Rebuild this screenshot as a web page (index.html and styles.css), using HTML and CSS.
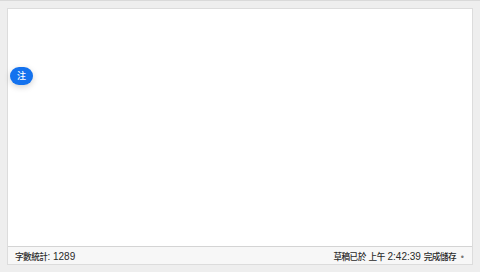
FILE: index.html
```html
<!DOCTYPE html>
<html lang="zh-Hant">
<head>
<meta charset="utf-8">
<link rel="stylesheet" href="styles.css">
</head>
<body>
<div class="frame">
  <div class="editor">
    <div class="page">
      <button class="note-btn">注</button>
    </div>
    <div class="status">
      <span class="count"><span class="cjk">字數統計</span>: 1289</span>
      <span class="saved"><span class="cjk">草稿已於</span> <span class="cjk">上午</span> 2:42:39 <span class="cjk">完成儲存</span> <span class="dot">•</span></span>
    </div>
  </div>
</div>
</body>
</html>
```
FILE: styles.css
```css
html, body {
  margin: 0;
  padding: 0;
  width: 480px;
  height: 272px;
  overflow: hidden;
}
body {
  background: #eeeeee;
  font-family: "Liberation Sans", "Noto Sans CJK TC", sans-serif;
  color: #333;
}
.frame {
  box-sizing: border-box;
  height: 272px;
  border-top: 1px solid #d9d9d9;
  padding: 7px 7px 7px 7px;
  display: flex;
}
.editor {
  flex: 1;
  display: flex;
  flex-direction: column;
  border: 1px solid #dcdcdc;
  background: #fff;
}
.page {
  flex: 1;
  position: relative;
  background: #fff;
}
.note-btn {
  position: absolute;
  left: 2px;
  top: 58px;
  width: 23px;
  height: 18px;
  border: none;
  border-radius: 9px;
  background: #1472ee;
  color: #fff;
  font-family: "Noto Sans CJK TC", sans-serif;
  font-size: 9px;
  font-weight: 500;
  padding: 0;
  line-height: 18px;
  box-shadow: 0 2px 6px rgba(0,0,0,0.18);
}
.status {
  height: 17px;
  border-top: 1px solid #d4d4d4;
  background: #f7f7f7;
  display: flex;
  justify-content: space-between;
  align-items: center;
  padding: 0 8px 0 7px;
  font-size: 10px;
  color: #2a2a2a;
  white-space: nowrap;
}
.cjk {
  font-family: "Noto Sans CJK TC", sans-serif;
  font-size: 8.6px;
  letter-spacing: -0.5px;
  font-weight: 500;
}
.dot {
  color: #777;
  font-size: 9px;
  margin-left: 2px;
}
```
